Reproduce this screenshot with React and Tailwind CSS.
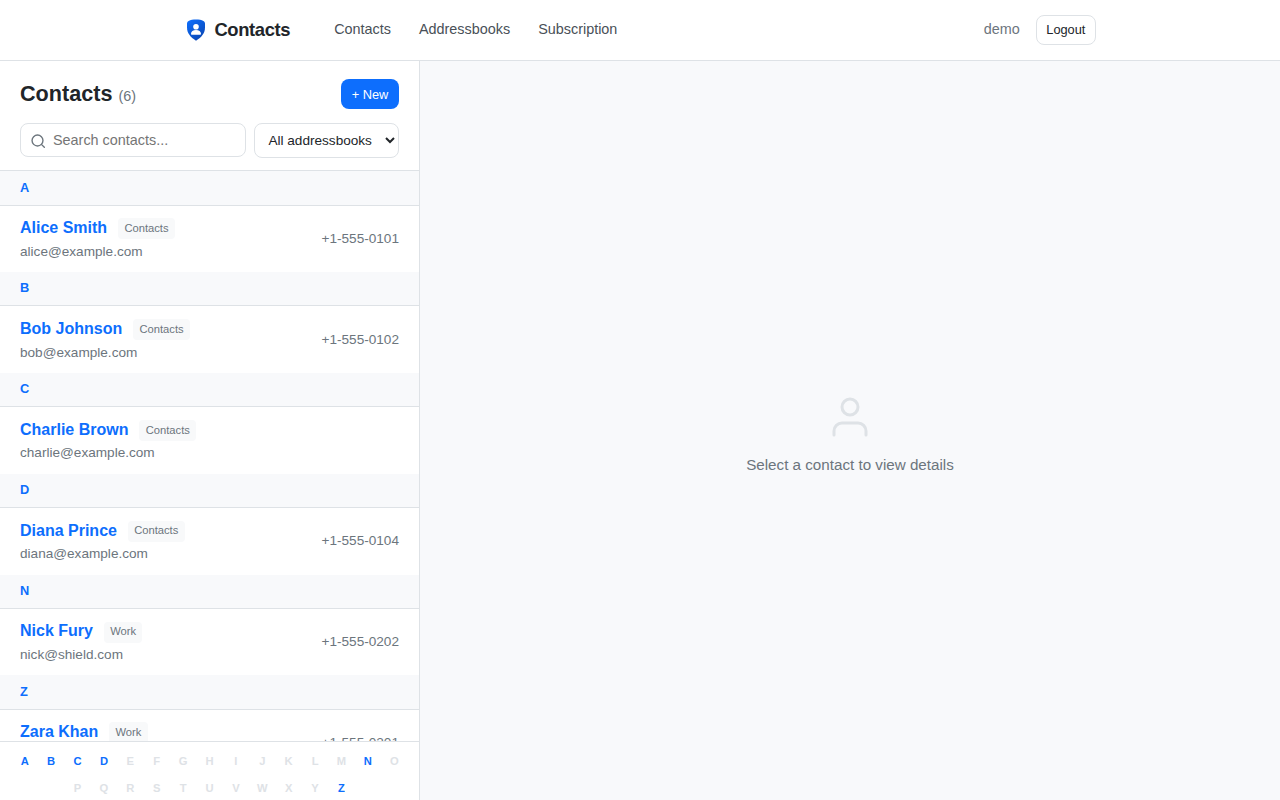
import React from 'react'
import { useState } from 'react'

const contacts = [
  { name: 'Alice Smith', book: 'Contacts', email: 'alice@example.com', phone: '+1-555-0101' },
  { name: 'Bob Johnson', book: 'Contacts', email: 'bob@example.com', phone: '+1-555-0102' },
  { name: 'Charlie Brown', book: 'Contacts', email: 'charlie@example.com', phone: '' },
  { name: 'Diana Prince', book: 'Contacts', email: 'diana@example.com', phone: '+1-555-0104' },
  { name: 'Nick Fury', book: 'Work', email: 'nick@shield.com', phone: '+1-555-0202' },
  { name: 'Zara Khan', book: 'Work', email: 'zara@example.com', phone: '+1-555-0201' },
]

const letters = 'ABCDEFGHIJKLMNOPQRSTUVWXYZ'.split('')

const Logo = () => (
  <svg className="w-6 h-6" viewBox="0 0 24 24" fill="none">
    <defs>
      <linearGradient id="shield" x1="4" y1="2" x2="20" y2="22" gradientUnits="userSpaceOnUse">
        <stop stopColor="#0d6efd" />
        <stop offset="1" stopColor="#0a43ad" />
      </linearGradient>
    </defs>
    <path d="M12 1.500C9 1.500 6.500 1.900 4.600 3 3.400 3.700 3 4.500 3 6v3.500c0 5.500 3.300 9.700 9 13.200 5.700-3.500 9-7.700 9-13.200V6c0-1.500-.4-2.300-1.600-3C17.500 1.900 15 1.500 12 1.500Z" fill="url(#shield)" />
    <circle cx="12" cy="8.800" r="2.800" fill="#fff" />
    <path d="M7 15.800c0-2.300 2.100-3.700 5-3.700s5 1.400 5 3.700c0 .6-.4 1-1 1H8c-.6 0-1-.4-1-1Z" fill="#fff" />
  </svg>
)

const Header = () => {
  return (
    <header className="h-[61px] shrink-0 bg-white border-b border-[#dee2e6]">
      <div className="max-w-[960px] h-full mx-auto px-6 flex items-center">
        <a href="#" className="flex items-center gap-[6.4px] text-[18.4px] font-bold tracking-[-0.02em] text-[#212529]">
          <Logo />
          Contacts
        </a>
        <nav className="ml-11 flex gap-7 text-[14.4px] leading-[23px] text-[#495057] pb-0.5">
          <a href="#">Contacts</a>
          <a href="#">Addressbooks</a>
          <a href="#">Subscription</a>
        </nav>
        <div className="ml-auto flex items-center gap-4">
          <span className="text-[14.4px] leading-[23px] text-[#6c757d] pb-0.5">demo</span>
          <button className="h-[30px] px-[9.6px] rounded-lg border border-[#dee2e6] text-[12.8px] text-[#212529]">Logout</button>
        </div>
      </div>
    </header>
  )
}

const ContactRow = ({ contact }) => (
  <div className="h-[66.56px] px-5 flex items-center justify-between bg-white">
    <div>
      <div className="text-base leading-[25.6px] h-[25.6px] whitespace-nowrap">
        <a href="#" className="font-semibold text-[#0d6efd]">{contact.name}</a>{' '}
        <span className="inline-block align-middle ml-[6.4px] px-[6.4px] py-[1.6px] rounded-[4px] bg-[#f8f9fa] text-[11.2px] leading-[17.92px] text-[#6c757d]">
          {contact.book}
        </span>
      </div>
      <div className="text-[13.6px] leading-[21.76px] text-[#6c757d]">{contact.email}</div>
    </div>
    <span className="text-[13.6px] leading-[21.76px] text-[#6c757d]">{contact.phone}</span>
  </div>
)

const App = () => {
  const [search, setSearch] = useState('')
  const shown = contacts.filter((c) => c.name.toLowerCase().includes(search.toLowerCase()))
  const used = contacts.map((c) => c.name[0])

  return (
    <div className="h-screen flex flex-col overflow-hidden bg-[#f8f9fb] font-['Liberation_Sans',Arial,sans-serif] text-[#212529]">
      <Header />
      <div className="flex flex-1 min-h-0">
        <aside className="w-[420px] shrink-0 flex flex-col bg-white border-r border-[#dee2e6]">
          <div className="h-[110px] shrink-0 px-5 pt-[18px] border-b border-[#dee2e6]">
            <div className="h-[30px] flex items-center justify-between">
              <h1 className="pt-0.5 text-[21.6px] leading-[30px] font-bold">
                Contacts <span className="text-[14.4px] font-normal text-[#6c757d]">({shown.length})</span>
              </h1>
              <button className="h-[30px] w-[58px] pt-px rounded-lg bg-[#0d6efd] text-white text-[12.8px]">+ New</button>
            </div>
            <div className="mt-3.5 flex items-start gap-2">
              <div className="flex-1 h-[34px] flex items-center rounded-lg border border-[#dee2e6] pl-[8.6px]">
                <svg className="w-[16.4px] h-[16.4px] mt-0.5 shrink-0" viewBox="0 0 24 24" fill="none" stroke="#6c757d" strokeWidth="2" strokeLinecap="round" strokeLinejoin="round">
                  <circle cx="11" cy="11" r="8" />
                  <path d="m21 21-4.350-4.350" />
                </svg>
                <input
                  type="text"
                  value={search}
                  onChange={(e) => setSearch(e.target.value)}
                  placeholder="Search contacts..."
                  className="ml-[7px] mt-0.5 w-40 text-[14.4px] outline-none placeholder:text-[#757575]"
                />
              </div>
              <select className="w-[145px] h-[35px] rounded-lg border border-[#dee2e6] bg-white pl-[9.4px] text-[13.6px]">
                <option>All addressbooks</option>
                <option>Contacts</option>
                <option>Work</option>
              </select>
            </div>
          </div>

          <div className="flex-1 min-h-0 overflow-hidden pt-[0.29px] bg-[#f8f9fb]">
            {shown.map((c) => (
              <div key={c.name}>
                <div className="px-5 py-[6.4px] bg-[#f8f9fb] border-b border-[#dee2e6] text-[12.8px] leading-[20.48px] font-bold text-[#0d6efd]">
                  {c.name[0]}
                </div>
                <ContactRow contact={c} />
              </div>
            ))}
          </div>

          <div className="h-[59px] shrink-0 pt-[7px] px-3 flex flex-wrap content-start justify-center gap-0.5 bg-white border-t border-[#dee2e6] text-[11.2px] font-bold">
            {letters.map((l) => (
              <span key={l} className={`w-[24.4px] h-[25px] flex items-center justify-center ${used.includes(l) ? 'text-[#0d6efd]' : 'text-[#dee2e6]'}`}>
                {l}
              </span>
            ))}
          </div>
        </aside>

        <main className="flex-1 pt-2 flex flex-col items-center justify-center gap-3 text-[#6c757d]">
          <svg className="w-12 h-12" viewBox="0 0 24 24" fill="none" stroke="#dee2e6" strokeWidth="1.5" strokeLinecap="round" strokeLinejoin="round">
            <path d="M20 21v-2a4 4 0 0 0-4-4H8a4 4 0 0 0-4 4v2" />
            <circle cx="12" cy="7" r="4" />
          </svg>
          <p className="text-[15.2px] leading-6">Select a contact to view details</p>
        </main>
      </div>
    </div>
  )
}

export default App
